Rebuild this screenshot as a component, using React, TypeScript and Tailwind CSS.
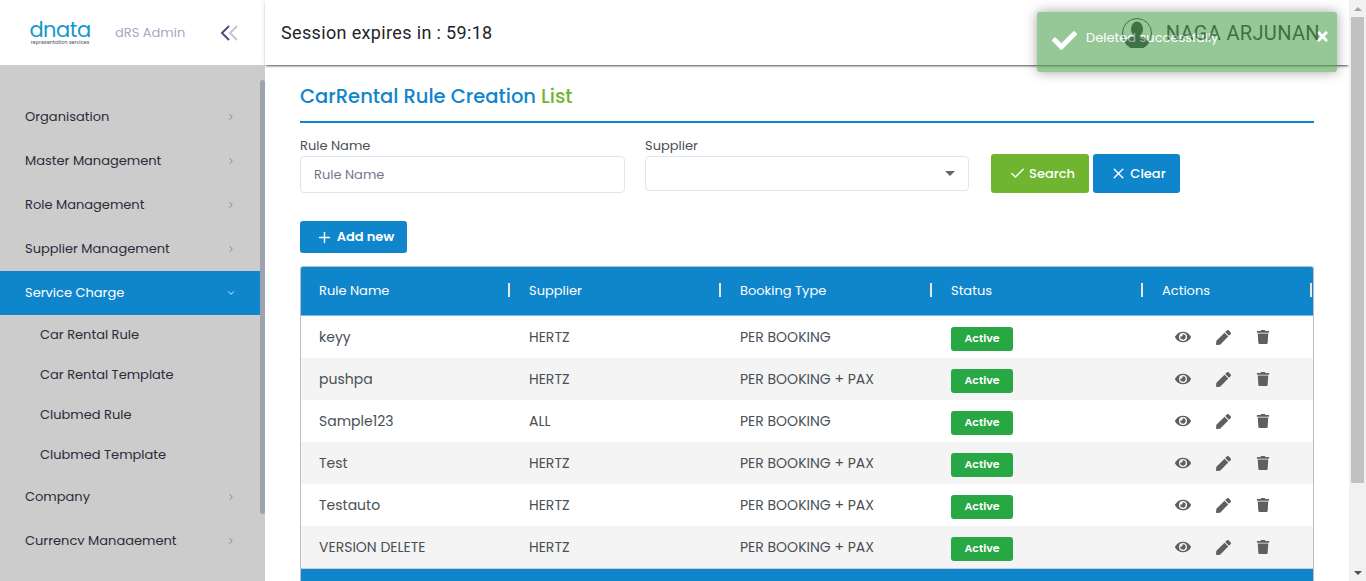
import React from "react"
import { Check, ChevronDown, ChevronRight, Plus, X } from "lucide-react"
import { FaCheck, FaEye, FaPen, FaTimes, FaTrash } from "react-icons/fa"

const font = "font-['Poppins','Inter','Liberation_Sans',sans-serif]"

const topMenu = ["Organisation", "Master Management", "Role Management", "Supplier Management"]
const subMenu = ["Car Rental Rule", "Car Rental Template", "Clubmed Rule", "Clubmed Template"]
const bottomMenu = ["Company", "Currency Management"]

const rows = [
  { name: "keyy", supplier: "HERTZ", type: "PER BOOKING" },
  { name: "pushpa", supplier: "HERTZ", type: "PER BOOKING + PAX" },
  { name: "Sample123", supplier: "ALL", type: "PER BOOKING" },
  { name: "Test", supplier: "HERTZ", type: "PER BOOKING + PAX" },
  { name: "Testauto", supplier: "HERTZ", type: "PER BOOKING + PAX" },
  { name: "VERSION DELETE", supplier: "HERTZ", type: "PER BOOKING + PAX" },
]

const columns = ["Rule Name", "Supplier", "Booking Type", "Status", "Actions"]

function MenuItem({ label }: { label: string }) {
  return (
    <div className="flex h-11 items-center justify-between pl-[25px] pr-6 text-[13px] text-[#2b2b3a]">
      <span>{label}</span>
      <ChevronRight size={10} className="text-[#74788d]" />
    </div>
  )
}

function Sidebar() {
  return (
    <aside className="flex h-full w-[265px] shrink-0 flex-col bg-[#cccccc]">
      <div className="flex h-[65px] shrink-0 items-center bg-white">
        <div className="ml-[31px] flex w-[58px] flex-col items-center">
          <span className="text-[21px] leading-[20px] tracking-[-0.5px] text-[#1199cc]">dnata</span>
          <span className="whitespace-nowrap text-[5px] leading-[6px] text-[#4b5563]">representation services</span>
        </div>
        <span className="ml-[26px] text-[13px] text-[#a4a8c4]">dRS Admin</span>
        <svg width="18" height="16" viewBox="0 0 18 16" fill="none" className="ml-[35px]">
          <path d="M9 1 2 8l7 7" stroke="#4a4f7c" strokeWidth="2" />
          <path d="M17 1l-7 7 7 7" stroke="#c3c5d8" strokeWidth="2" />
        </svg>
      </div>
      <div className="flex min-h-0 flex-1">
        <nav className="h-[480px] w-[260px] overflow-hidden pt-[30px]">
          {topMenu.map((item) => (
            <MenuItem key={item} label={item} />
          ))}
          <div className="flex h-11 items-center justify-between bg-[#0f85cb] pl-[25px] pr-6 text-[13px] text-white">
            <span>Service Charge</span>
            <ChevronDown size={10} />
          </div>
          {subMenu.map((item) => (
            <div key={item} className="flex h-10 items-center pl-10 text-[13px] text-[#2b2b3a]">
              {item}
            </div>
          ))}
          {bottomMenu.map((item) => (
            <MenuItem key={item} label={item} />
          ))}
        </nav>
        <div className="mt-[15px] h-[434px] w-[5px] rounded-sm bg-[#9ca3af]" />
      </div>
    </aside>
  )
}

function Toast() {
  return (
    <div className="absolute left-[1037px] top-3 flex h-[60px] w-[300px] items-start rounded-[3px] bg-[#51a351] pl-[15px] pt-[15px] text-[13px] text-white opacity-60 shadow-[0_0_12px_rgba(0,0,0,0.6)]">
      <FaCheck size={25} className="mt-[1px]" />
      <span className="ml-[9px] mt-[1px]">Deleted successfully</span>
      <FaTimes size={15} className="absolute right-[7px] top-[17px]" />
    </div>
  )
}

function Header() {
  return (
    <header className="flex h-[65px] shrink-0 items-center justify-between pl-4 pr-[29px] shadow-[0_2px_2px_-1px_rgba(0,0,0,0.65),0_0_5px_rgba(0,0,0,0.12)]">
      <span className="font-['Roboto',sans-serif] text-[18px] tracking-[0.35px] text-[#212529]">Session expires in : 59:18</span>
      <div className="flex items-center gap-[14px]">
        <svg width="30" height="30" viewBox="0 0 30 30">
          <circle cx="15" cy="15" r="14.5" fill="white" stroke="#1f2937" />
          <ellipse cx="15" cy="11" rx="6" ry="7.5" fill="#1f2937" />
          <path d="M3 25c2-5 7-6 9-7h6c2 1 7 2 9 7a14.5 14.5 0 0 1-24 0Z" fill="#1f2937" />
        </svg>
        <span className="font-['Roboto',sans-serif] text-[20px] tracking-[0.35px] text-[#212529]">NAGA ARJUNAN</span>
      </div>
    </header>
  )
}

function SearchForm() {
  return (
    <div className="mt-[13px] flex items-start">
      <label className="w-[325px] text-[13px] text-[#495057]">
        <span className="block h-5 leading-[20px]">Rule Name</span>
        <div className="flex h-[37px] items-center rounded border border-[#e2e5ec] pl-[13px] text-[#74788d]">Rule Name</div>
      </label>
      <label className="ml-5 w-[324px] text-[13px] text-[#495057]">
        <span className="block h-5 leading-[20px]">Supplier</span>
        <div className="flex h-[35px] items-center justify-end rounded border border-[#e2e5ec] pr-[13px]">
          <span className="h-0 w-0 border-x-[5px] border-t-[5px] border-x-transparent border-t-[#666]" />
        </div>
      </label>
      <div className="ml-[22px] mt-[18px] flex gap-1">
        <button className="flex h-[39px] w-[98px] items-center justify-center gap-[3px] rounded-[3px] bg-[#6fb52f] pl-1 text-[13px] font-medium text-white">
          <Check size={17} />
          Search
        </button>
        <button className="flex h-[39px] w-[87px] items-center justify-center gap-[3px] rounded-[3px] bg-[#0f85cb] pl-[3px] text-[13px] font-medium text-white">
          <X size={17} />
          Clear
        </button>
      </div>
    </div>
  )
}

function RuleTable() {
  return (
    <div className="mt-[13px] overflow-hidden rounded-t-[3px] border-x border-t border-[#b8bccb]">
      <div className="grid h-[49px] grid-cols-[210px_211px_211px_211px_169px] items-center border-b border-[#7fb8e0] bg-[#0f85cb] text-[13px] text-white">
        {columns.map((col) => (
          <div key={col} className="mb-0.5 mr-px flex h-[14px] items-center justify-between pl-[18px] leading-none">
            <span>{col}</span>
            <span className="h-[14px] w-0.5 bg-[#e5e7eb]" />
          </div>
        ))}
      </div>
      {rows.map((row, i) => (
        <div
          key={row.name}
          className={`grid h-[42px] grid-cols-[210px_211px_211px_211px_169px] items-center text-sm text-[#495057] ${i % 2 ? "bg-[#f4f4f4]" : "bg-white"}`}
        >
          <span className="pl-[18px]">{row.name}</span>
          <span className="pl-[18px]">{row.supplier}</span>
          <span className="pl-[18px]">{row.type}</span>
          <span className="pl-[18px]">
            <span className="mt-1 flex h-6 w-[62px] items-center justify-center rounded-[3px] bg-[#28a745] text-[11px] font-semibold text-white">Active</span>
          </span>
          <span className="flex items-center pl-[31px] text-[#5f5f5f]">
            <FaEye size={16} />
            <FaPen size={15} className="ml-[25px]" />
            <FaTrash size={14} className="ml-[25px]" />
          </span>
        </div>
      ))}
      <div className="h-6 border-t border-[#c8ccd6] bg-[#0f85cb]" />
    </div>
  )
}

export default function App() {
  return (
    <div className={`${font} relative flex h-[581px] w-full overflow-hidden bg-white`}>
      <Sidebar />
      <main className="flex min-w-0 flex-1 flex-col">
        <Header />
        <div className="px-[35px]">
          <h1 className="mt-[17px] flex h-[41px] items-start border-b-2 border-[#0f85cb] text-[19.5px] font-medium leading-[30px] text-[#0f85cb]">
            CarRental Rule Creation&nbsp;<span className="text-[#6fb52f]">List</span>
          </h1>
          <SearchForm />
          <button className="mt-[28px] flex h-8 w-[107px] items-center justify-center gap-1 rounded-[3px] bg-[#0f85cb] pl-[3px] text-[13px] font-semibold text-white">
            <Plus size={17} />
            Add new
          </button>
          <RuleTable />
        </div>
      </main>
      <div className="flex w-[17px] shrink-0 flex-col items-center bg-[#f1f1f1]">
        <span className="mt-[7px] h-0 w-0 border-x-4 border-b-4 border-x-transparent border-b-[#a3a3a3]" />
        <div className="mt-[6px] h-[466px] w-[13px] bg-[#c1c1c1]" />
        <span className="mt-auto mb-[6px] h-0 w-0 border-x-4 border-t-4 border-x-transparent border-t-[#505050]" />
      </div>
      <Toast />
    </div>
  )
}
